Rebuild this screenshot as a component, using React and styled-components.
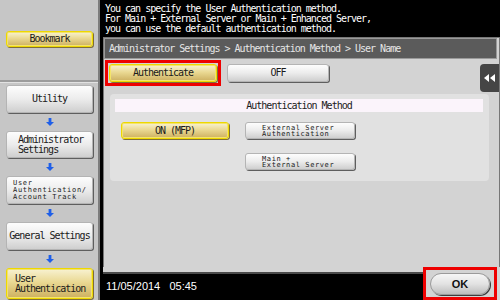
import React from 'react';
import styled, { createGlobalStyle, css } from 'styled-components';

const GlobalStyle = createGlobalStyle`
  html, body {
    margin: 0;
    padding: 0;
    background: #000;
  }
  * {
    box-sizing: border-box;
  }
`;

const mono = `"DejaVu Sans Mono", "Liberation Mono", monospace`;

const Screen = styled.div`
  display: flex;
  width: 500px;
  height: 300px;
  background: #000;
  overflow: hidden;
  font-family: ${mono};
  color: #1a1a1a;
`;

const Sidebar = styled.aside`
  width: 100px;
  display: flex;
  flex-direction: column;
  background: #c6c6c6;
  border-right: 2px solid #7c7c7c;
`;

const BookmarkArea = styled.div`
  height: 82px;
  padding: 31px 0 0 6px;
  border-bottom: 2px solid #9c9c9c;
  box-shadow: 0 1px 0 #e2e2e2;
`;

const buttonBase = css`
  display: flex;
  align-items: center;
  border-radius: 3px;
  font-family: ${mono};
  color: #1a1a1a;
  cursor: pointer;
`;

const yellow = css`
  background: linear-gradient(#f8f2d2, #ead993 45%, #cdb060);
  border: 1px solid #eed800;
  box-shadow: 1px 1px 0 #7e6e3a, inset 0 0 0 1px #f4e46a;
`;

const gray = css`
  background: linear-gradient(#fdfdfd, #ececec 50%, #cfcfcf);
  border: 1px solid #b4b4b4;
  box-shadow: 1px 1px 0 #5e5e5e;
`;

const Key = styled.button`
  ${buttonBase}
  ${(p) => (p.$active ? yellow : gray)}
  width: ${(p) => p.$w || 87}px;
  height: ${(p) => p.$h || 16}px;
  padding: 0 0 0 ${(p) => (p.$left ? p.$left : 0)}px;
  justify-content: ${(p) => (p.$left ? 'flex-start' : 'center')};
  text-align: ${(p) => (p.$left ? 'left' : 'center')};
  font-size: ${(p) => p.$size || 10}px;
  line-height: ${(p) => p.$lh || 10}px;
  letter-spacing: ${(p) => (p.$size && p.$size < 9 ? '0.6px' : '-1px')};
  white-space: pre;
`;

const NavList = styled.nav`
  display: flex;
  flex-direction: column;
  padding: 3px 0 0 6px;
`;

const Arrow = styled.div`
  height: 18px;
  width: 87px;
  display: flex;
  align-items: center;
  justify-content: center;
`;

const Small = styled.span`
  font-size: 7px;
  line-height: 7px;
  letter-spacing: 0.7px;
  display: block;
`;

const Main = styled.main`
  flex: 1;
  display: flex;
  flex-direction: column;
  padding-left: 3px;
`;

const Message = styled.div`
  height: 37px;
  padding: 4px 0 0 2px;
  color: #fff;
  font-size: 10px;
  line-height: 10px;
  letter-spacing: -1px;
  white-space: pre;
`;

const Panel = styled.section`
  flex: 1;
  display: flex;
  flex-direction: column;
  background: #d3d3d3;
  border: 1px solid #777;
  border-bottom: none;
`;

const Crumb = styled.div`
  height: 21px;
  margin: 0 2px 0 0;
  background: #5b5b5b;
  border: 1px solid #9a9a9a;
  color: #e6e6e6;
  font-size: 10px;
  letter-spacing: -1px;
  display: flex;
  align-items: center;
  padding-left: 4px;
`;

const Toolbar = styled.div`
  display: flex;
  align-items: flex-start;
  padding: 1px 0 0 1px;
`;

const RedFrame = styled.div`
  border: 3px solid #ee0000;
  padding: ${(p) => p.$pad || '1px'};
  display: flex;
`;

const OffSlot = styled.div`
  margin: 4px 0 0 6px;
`;

const Spacer = styled.div`
  flex: 1;
`;

const CollapseTab = styled.div`
  width: 19px;
  height: 28px;
  margin-top: 4px;
  background: #454545;
  border-radius: 4px 0 0 4px;
  display: flex;
  align-items: center;
  justify-content: center;
`;

const Method = styled.div`
  margin: 2px 10px 0 6px;
  height: 87px;
  background: #e1e1e1;
  border-radius: 4px;
  padding: 5px 6px 0 5px;
`;

const MethodTitle = styled.div`
  height: 13px;
  background: #fbf4fb;
  text-align: center;
  font-size: 10px;
  line-height: 13px;
  letter-spacing: -1px;
`;

const MethodGrid = styled.div`
  display: grid;
  grid-template-columns: 108px 110px;
  column-gap: 16px;
  row-gap: 14px;
  padding: 10px 0 0 6px;
`;

const Footer = styled.footer`
  height: 33px;
  display: flex;
  align-items: flex-end;
  background: #d3d3d3;
`;

const DateBar = styled.div`
  flex: 1;
  height: 28px;
  background: #000;
  border-top: 2px solid #4a4a4a;
  color: #fff;
  font-family: "Liberation Sans", Arial, sans-serif;
  font-size: 11px;
  display: flex;
  align-items: center;
  padding: 0 0 2px 3px;
  white-space: pre;
`;

const OkCell = styled.div`
  align-self: stretch;
  margin-right: 3px;
`;

const OkButton = styled.button`
  width: 60px;
  height: 22px;
  border-radius: 11px;
  background: linear-gradient(#f6f6f6, #e2e2e2 50%, #bdbdbd);
  border: 1px solid #9a9a9a;
  box-shadow: 1px 1px 0 #3e3e3e;
  font-family: "Liberation Sans", Arial, sans-serif;
  font-weight: bold;
  font-size: 11px;
  color: #111;
  padding: 0;
`;

function DownArrow() {
  return (
    <svg width="8" height="8" viewBox="0 0 8 8">
      <path d="M2.6 0h2.8v4H8L4 8 0 4h2.6z" fill="#1f5fe8" />
    </svg>
  );
}

function Rewind() {
  return (
    <svg width="11" height="8" viewBox="0 0 11 8">
      <path d="M5 0v8L0 4zM11 0v8L6 4z" fill="#fff" />
    </svg>
  );
}

export default function App() {
  return (
    <>
      <GlobalStyle />
      <Screen>
        <Sidebar>
          <BookmarkArea>
            <Key $active $h={16}>Bookmark</Key>
          </BookmarkArea>
          <NavList>
            <Key $h={28}>Utility</Key>
            <Arrow><DownArrow /></Arrow>
            <Key $h={27} $left={11}>{'Administrator\nSettings'}</Key>
            <Arrow><DownArrow /></Arrow>
            <Key $h={28} $left={6}>
              <span>
                <Small>User</Small>
                <Small>Authentication/</Small>
                <Small>Account Track</Small>
              </span>
            </Key>
            <Arrow><DownArrow /></Arrow>
            <Key $h={28}>General Settings</Key>
            <Arrow><DownArrow /></Arrow>
            <Key $active $h={31} $left={8}>{'User\nAuthentication'}</Key>
          </NavList>
        </Sidebar>
        <Main>
          <Message>
            {'You can specify the User Authentication method.\nFor Main + External Server or Main + Enhanced Server,\nyou can use the default authentication method.'}
          </Message>
          <Panel>
            <Crumb>Administrator Settings &gt; Authentication Method &gt; User Name</Crumb>
            <Toolbar>
              <RedFrame>
                <Key $active $w={108} $h={18}>Authenticate</Key>
              </RedFrame>
              <OffSlot>
                <Key $w={102} $h={18}>OFF</Key>
              </OffSlot>
              <Spacer />
              <CollapseTab><Rewind /></CollapseTab>
            </Toolbar>
            <Method>
              <MethodTitle>Authentication Method</MethodTitle>
              <MethodGrid>
                <Key $active $w={108} $h={17}>ON (MFP)</Key>
                <Key $w={110} $h={17} $left={16} $size={7} $lh={6}>{'External Server\nAuthentication'}</Key>
                <span />
                <Key $w={110} $h={17} $left={16} $size={7} $lh={6}>{'Main +\nExternal Server'}</Key>
              </MethodGrid>
            </Method>
          </Panel>
          <Footer>
            <DateBar>{'11/05/2014   05:45'}</DateBar>
            <OkCell>
              <RedFrame $pad="3px 4px 2px 4px">
                <OkButton>OK</OkButton>
              </RedFrame>
            </OkCell>
          </Footer>
        </Main>
      </Screen>
    </>
  );
}
